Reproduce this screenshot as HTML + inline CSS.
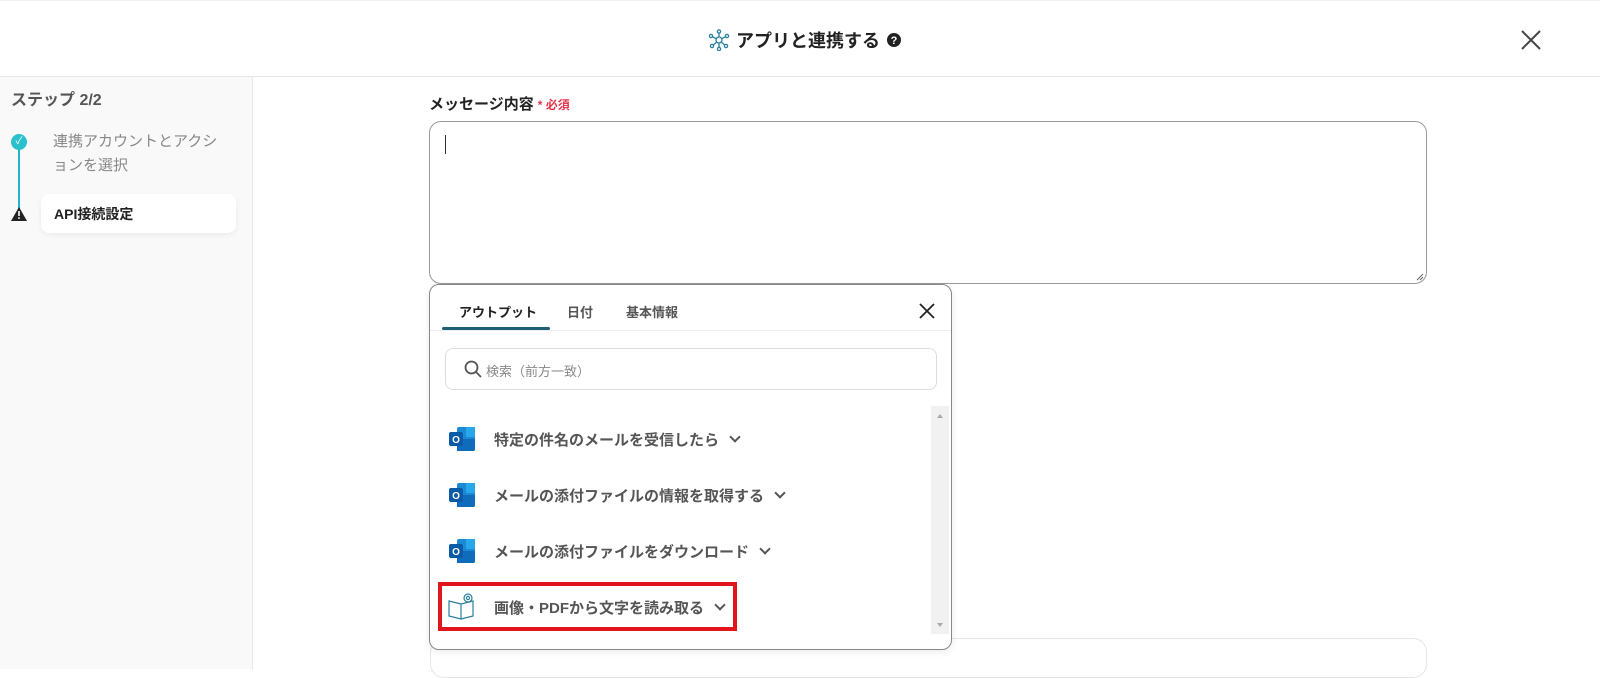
<!DOCTYPE html>
<html><head><meta charset="utf-8"><style>
*{box-sizing:border-box;margin:0;padding:0}
body{width:1600px;height:669px;overflow:hidden;background:#fff;font-family:"Liberation Sans","Noto Sans CJK JP",sans-serif;position:relative}
.hdr{position:absolute;left:0;top:0;width:1600px;height:77px;border-bottom:1px solid #e6e6e6;border-top:1px solid #f0f0f0}
.title{position:absolute;left:708px;top:26px;font-size:18px;font-weight:bold;color:#222;display:flex;align-items:center;gap:6px}
.side{position:absolute;left:0;top:77px;width:253px;height:592px;background:#f9f9f9;border-right:1px solid #e8e8e8}
.abs{position:absolute}
.ta{position:absolute;left:429px;top:121px;width:998px;height:163px;border:1px solid #999;border-radius:12px}
.dd{position:absolute;left:429px;top:284px;width:523px;height:366px;border:1px solid #888;border-radius:10px;background:#fff;box-shadow:0 2px 8px rgba(0,0,0,.08)}
.item{position:absolute;left:18px;display:flex;align-items:center;font-size:15px;font-weight:bold;color:#555}
.chev{margin-left:12px;width:8px;height:8px;border-right:2px solid #555;border-bottom:2px solid #555;transform:rotate(45deg);margin-top:-4px}
</style></head><body>
<div class="hdr">
 <div class="title">
  <svg width="22" height="22" viewBox="0 0 22 22" fill="none" stroke="#2a7f9c" stroke-width="1.3"><circle cx="11" cy="11" r="3"/><circle cx="11" cy="2.5" r="1.6"/><circle cx="3" cy="7" r="1.6"/><circle cx="19" cy="7" r="1.6"/><circle cx="4" cy="17" r="1.6"/><circle cx="18" cy="17" r="1.6"/><circle cx="11" cy="20" r="1.6"/><path d="M11 4v4M4.5 7.8l4 2M17.5 7.8l-4 2M5.3 16l3.5-3M16.7 16l-3.5-3M11 14v4.4"/></svg>
  <span>アプリと連携する</span>
  <svg width="16" height="16" viewBox="0 0 16 16"><circle cx="8" cy="8" r="7" fill="#222"/><text x="8" y="12" font-size="11" font-weight="bold" fill="#fff" text-anchor="middle" font-family="Liberation Sans">?</text></svg>
 </div>
 <svg class="abs" style="left:1521px;top:29px" width="20" height="20" viewBox="0 0 20 20" stroke="#444" stroke-width="2"><path d="M1 1L19 19M19 1L1 19"/></svg>
</div>
<div class="side">
 <div class="abs" style="left:11px;top:9px;font-size:16px;font-weight:bold;color:#555">ステップ 2/2</div>
 <div class="abs" style="left:18px;top:67px;width:2px;height:66px;background:#27b5c4"></div>
 <div class="abs" style="left:11px;top:57px;width:16px;height:16px;border-radius:50%;background:#2cc0cc;color:#fff;font-size:10px;text-align:center;line-height:16px">✓</div>
 <div class="abs" style="left:53px;top:53px;width:170px;font-size:15px;line-height:24px;color:#888">連携アカウントとアクションを選択</div>
 <div class="abs" style="left:41px;top:117px;width:195px;height:39px;background:#fff;border-radius:8px;box-shadow:0 2px 6px rgba(0,0,0,.06);font-size:14px;font-weight:bold;color:#222;padding:10px 0 0 13px">API接続設定</div>
 <svg class="abs" style="left:10px;top:129px" width="18" height="16" viewBox="0 0 18 16"><path d="M9 1L17 15H1Z" fill="#222"/><rect x="8.2" y="5" width="1.6" height="5" fill="#fff"/><rect x="8.2" y="11.3" width="1.6" height="1.6" fill="#fff"/></svg>
</div>
<div class="abs" style="left:429px;top:93px;font-size:15px;font-weight:bold;color:#222">メッセージ内容<span style="color:#e5334b;font-size:12px;margin-left:4px">* 必須</span></div>
<div class="ta"><div class="abs" style="left:15px;top:13px;width:1px;height:19px;background:#333"></div>
<svg class="abs" style="right:2px;bottom:2px" width="8" height="8" stroke="#666"><path d="M1 7L7 1M4 7L7 4"/></svg></div>
<div class="abs" style="left:430px;top:638px;width:997px;height:40px;border:1px solid #e5e5e5;border-radius:14px"></div>
<div class="dd">
 <div class="abs" style="left:29px;top:17px;font-size:13px;font-weight:bold;color:#222">アウトプット</div>
 <div class="abs" style="left:137px;top:17px;font-size:13px;font-weight:bold;color:#555">日付</div>
 <div class="abs" style="left:196px;top:17px;font-size:13px;font-weight:bold;color:#555">基本情報</div>
 <svg class="abs" style="left:489px;top:18px" width="16" height="16" stroke="#222" stroke-width="1.8"><path d="M1 1L15 15M15 1L1 15"/></svg>
 <div class="abs" style="left:0;top:45px;width:521px;height:1px;background:#eee"></div>
 <div class="abs" style="left:12px;top:42px;width:108px;height:3px;background:#1e5f74;border-radius:2px"></div>
 <div class="abs" style="left:15px;top:63px;width:492px;height:42px;border:1px solid #ddd;border-radius:8px"></div>
 <svg class="abs" style="left:34px;top:75px" width="18" height="18" fill="none" stroke="#555" stroke-width="1.8"><circle cx="7.5" cy="7.5" r="6"/><path d="M12 12l5 5"/></svg>
 <div class="abs" style="left:56px;top:76px;font-size:13px;color:#888">検索（前方一致）</div>
 <div class="abs" style="left:501px;top:121px;width:18px;height:228px;background:#f1f1f1"></div>
 <div class="abs" style="left:507px;top:126px;border:3px solid transparent;border-bottom:4px solid #aaa"></div>
 <div class="abs" style="left:507px;top:338px;border:3px solid transparent;border-top:4px solid #aaa"></div>
 <div class="item" style="top:140px"><svg width="28" height="28" viewBox="0 0 28 28"><rect x="9" y="2" width="18" height="24" rx="2" fill="#1a8ad4"/><rect x="18" y="2" width="9" height="10" fill="#28a8ea"/><path d="M9 14h18v10a2 2 0 0 1-2 2H9z" fill="#0f6cbd"/><rect x="1" y="7" width="14" height="14" rx="2" fill="#0a5aa8"/><text x="8" y="18" font-size="10" font-weight="bold" fill="#fff" text-anchor="middle" font-family="Liberation Sans">O</text></svg><span style="margin-left:18px">特定の件名のメールを受信したら</span><i class="chev"></i></div>
 <div class="item" style="top:196px"><svg width="28" height="28" viewBox="0 0 28 28"><rect x="9" y="2" width="18" height="24" rx="2" fill="#1a8ad4"/><rect x="18" y="2" width="9" height="10" fill="#28a8ea"/><path d="M9 14h18v10a2 2 0 0 1-2 2H9z" fill="#0f6cbd"/><rect x="1" y="7" width="14" height="14" rx="2" fill="#0a5aa8"/><text x="8" y="18" font-size="10" font-weight="bold" fill="#fff" text-anchor="middle" font-family="Liberation Sans">O</text></svg><span style="margin-left:18px">メールの添付ファイルの情報を取得する</span><i class="chev"></i></div>
 <div class="item" style="top:252px"><svg width="28" height="28" viewBox="0 0 28 28"><rect x="9" y="2" width="18" height="24" rx="2" fill="#1a8ad4"/><rect x="18" y="2" width="9" height="10" fill="#28a8ea"/><path d="M9 14h18v10a2 2 0 0 1-2 2H9z" fill="#0f6cbd"/><rect x="1" y="7" width="14" height="14" rx="2" fill="#0a5aa8"/><text x="8" y="18" font-size="10" font-weight="bold" fill="#fff" text-anchor="middle" font-family="Liberation Sans">O</text></svg><span style="margin-left:18px">メールの添付ファイルをダウンロード</span><i class="chev"></i></div>
 <div class="abs" style="left:8px;top:297px;width:299px;height:49px;border:4px solid #e0161c"></div>
 <div class="item" style="top:308px"><svg width="28" height="28" viewBox="0 0 28 28" fill="none" stroke="#2a7f9c" stroke-width="1.2"><path d="M1 8l12 3v15L1 23z"/><path d="M13 11l12-3v15l-12 3"/><circle cx="20" cy="5" r="4"/><circle cx="20" cy="5" r="1.6"/></svg><span style="margin-left:18px">画像・PDFから文字を読み取る</span><i class="chev"></i></div>
</div>
</body></html>
